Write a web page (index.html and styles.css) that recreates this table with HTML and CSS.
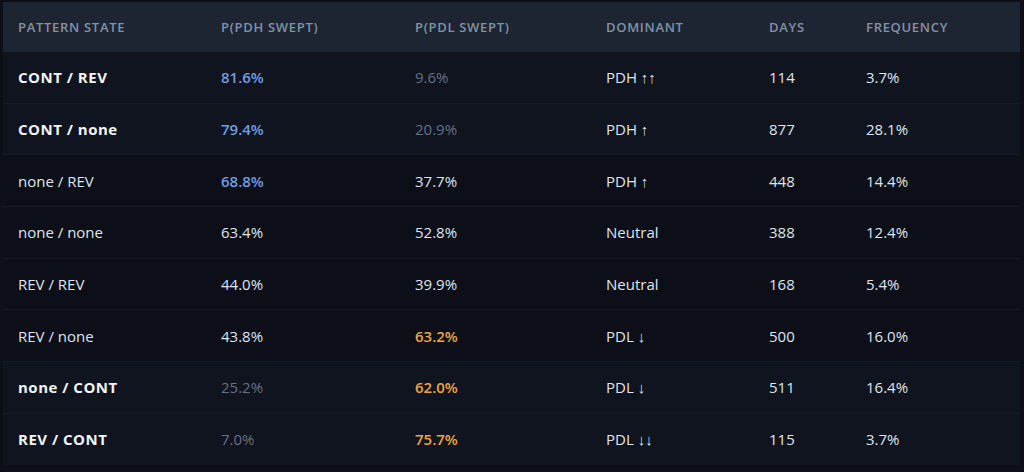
FILE: index.html
```html
<!DOCTYPE html>
<html>
<head>
<meta charset="utf-8">
<link rel="stylesheet" href="styles.css">
</head>
<body>
<div class="wrap">
<table class="tbl">
<colgroup>
<col class="c1"><col class="c2"><col class="c3"><col class="c4"><col class="c5"><col class="c6">
</colgroup>
<thead>
<tr><th>Pattern State</th><th>P(PDH Swept)</th><th>P(PDL Swept)</th><th>Dominant</th><th>Days</th><th>Frequency</th></tr>
</thead>
<tbody>
<tr class="hl"><td class="b">CONT / REV</td><td class="blue">81.6%</td><td class="mute">9.6%</td><td>PDH ↑↑</td><td>114</td><td>3.7%</td></tr>
<tr class="hl"><td class="b">CONT / none</td><td class="blue">79.4%</td><td class="mute">20.9%</td><td>PDH ↑</td><td>877</td><td>28.1%</td></tr>
<tr><td>none / REV</td><td class="blue">68.8%</td><td>37.7%</td><td>PDH ↑</td><td>448</td><td>14.4%</td></tr>
<tr><td>none / none</td><td>63.4%</td><td>52.8%</td><td>Neutral</td><td>388</td><td>12.4%</td></tr>
<tr><td>REV / REV</td><td>44.0%</td><td>39.9%</td><td>Neutral</td><td>168</td><td>5.4%</td></tr>
<tr><td>REV / none</td><td>43.8%</td><td class="orange">63.2%</td><td>PDL ↓</td><td>500</td><td>16.0%</td></tr>
<tr class="hl"><td class="b">none / CONT</td><td class="mute">25.2%</td><td class="orange">62.0%</td><td>PDL ↓</td><td>511</td><td>16.4%</td></tr>
<tr class="hl"><td class="b">REV / CONT</td><td class="mute">7.0%</td><td class="orange">75.7%</td><td>PDL ↓↓</td><td>115</td><td>3.7%</td></tr>
</tbody>
</table>
</div>
</body>
</html>
```
FILE: styles.css
```css
html, body {
  margin: 0;
  padding: 0;
  background: #0c0f17;
}
body {
  font-family: "Open Sans", "Noto Sans", sans-serif;
  color: #d8dee9;
}
.wrap {
  padding: 2px 4px 0 3px;
}
.tbl {
  width: 1017px;
  border-collapse: collapse;
  table-layout: fixed;
}
.c1 { width: 203px; }
.c2 { width: 194px; }
.c3 { width: 191px; }
.c4 { width: 163px; }
.c5 { width: 97px; }
.c6 { width: 169px; }
thead th {
  background: #1e2532;
  height: 50px;
  padding: 0 15px;
  text-align: left;
  font-size: 13px;
  font-weight: 600;
  letter-spacing: 0.7px;
  text-transform: uppercase;
  color: #8391a7;
}
tbody td {
  height: 50.7px;
  padding: 0 15px;
  font-size: 15px;
  color: #dfe5ee;
  border-top: 1px solid #161b26;
}
tbody tr:first-child td { border-top: none; }
tbody tr.hl td {
  background: #10141e;
}
td.b {
  font-weight: 700;
  letter-spacing: 0.5px;
  color: #f1f4f8;
}
td.blue {
  color: #6d9fe3;
  font-weight: 600;
}
td.mute {
  color: #667185;
}
td.orange {
  color: #f0a33c;
  font-weight: 600;
}
```
